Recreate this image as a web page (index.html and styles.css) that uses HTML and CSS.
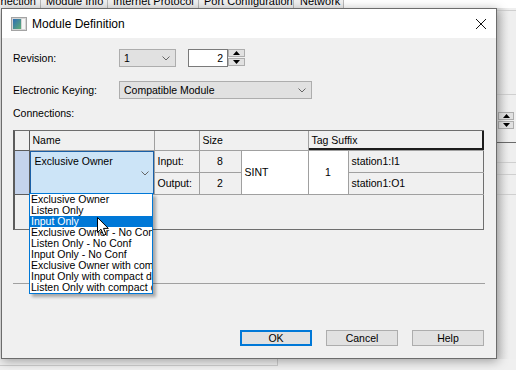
FILE: index.html
```html
<!DOCTYPE html>
<html lang="en">
<head>
  <meta charset="UTF-8">
  <title>Module Definition</title>
  <link rel="stylesheet" href="styles.css">
</head>
<body>
  <!-- tab strip of the properties window behind the dialog -->
  <div class="tabs">
    <span class="tab tab-first">nection</span>
    <span class="tab tab-info">Module Info</span>
    <span class="tab tab-ip">Internet Protocol</span>
    <span class="tab tab-port">Port Configuration</span>
    <span class="tab tab-net">Network</span>
    <span class="tab-fill"></span>
  </div>

  <div class="stage">
    <div class="dialog">
      <div class="titlebar">
        <svg class="app-icon" width="16" height="14" viewBox="0 0 16 14">
          <defs>
            <linearGradient id="ig" x1="0" y1="0" x2="1" y2="1">
              <stop offset="0" stop-color="#2f6db5"/>
              <stop offset="1" stop-color="#5fae74"/>
            </linearGradient>
          </defs>
          <rect x="0.5" y="0.5" width="15" height="13" fill="#d6d6d6" stroke="#a3a3a3"/>
          <rect x="2" y="2" width="8" height="10" fill="url(#ig)"/>
          <rect x="11" y="2" width="3" height="10" fill="#f6f6f6"/>
        </svg>
        <span class="title">Module Definition</span>
        <svg class="close" width="12" height="12" viewBox="0 0 12 12">
          <path d="M1 1 L11 11 M11 1 L1 11" stroke="#111" stroke-width="1"/>
        </svg>
      </div>

      <div class="dialog-body">
        <div class="form-row">
          <span class="field-label">Revision:</span>
          <div class="combo combo-small">
            <span>1</span>
            <svg class="chev" width="8" height="5" viewBox="0 0 8 5"><path d="M0.5 0.5 L4 4 L7.5 0.5" fill="none" stroke="#666"/></svg>
          </div>
          <div class="num-input">2</div>
          <div class="spin">
            <div class="spin-btn"><svg width="7" height="4" viewBox="0 0 7 4"><path d="M0 4 L3.5 0 L7 4 Z" fill="#000"/></svg></div>
            <div class="spin-btn"><svg width="7" height="4" viewBox="0 0 7 4"><path d="M0 0 L3.5 4 L7 0 Z" fill="#000"/></svg></div>
          </div>
        </div>

        <div class="form-row row-keying">
          <span class="field-label">Electronic Keying:</span>
          <div class="combo combo-wide">
            <span>Compatible Module</span>
            <svg class="chev" width="8" height="5" viewBox="0 0 8 5"><path d="M0.5 0.5 L4 4 L7.5 0.5" fill="none" stroke="#666"/></svg>
          </div>
        </div>

        <div class="connections-label">Connections:</div>

        <div class="grid-wrap">
          <table class="conn-grid">
            <colgroup>
              <col class="c-rh"><col class="c-name"><col class="c-label"><col class="c-val"><col class="c-type"><col class="c-tag"><col class="c-suffix">
            </colgroup>
            <tr class="head">
              <th class="rh"></th>
              <th>Name</th>
              <th></th>
              <th colspan="2">Size</th>
              <th colspan="2" class="hot">Tag Suffix</th>
            </tr>
            <tr class="r1">
              <td class="rh rh-sel" rowspan="2"></td>
              <td class="name" rowspan="2">
                <div class="name-combo">
                  <span>Exclusive Owner</span>
                  <svg class="chev" width="8" height="5" viewBox="0 0 8 5"><path d="M0.5 0.5 L4 4 L7.5 0.5" fill="none" stroke="#666"/></svg>
                </div>
              </td>
              <td>Input:</td>
              <td class="num">8</td>
              <td class="white" rowspan="2">SINT</td>
              <td class="white num" rowspan="2">1</td>
              <td>station1:I1</td>
            </tr>
            <tr class="r2">
              <td>Output:</td>
              <td class="num">2</td>
              <td>station1:O1</td>
            </tr>
            <tr class="r3">
              <td class="rh"></td>
              <td colspan="6" class="blank"></td>
            </tr>
          </table>

          <ul class="dropdown">
            <li>Exclusive Owner</li>
            <li>Listen Only</li>
            <li class="active">Input Only</li>
            <li>Exclusive Owner - No Conf</li>
            <li>Listen Only - No Conf</li>
            <li>Input Only - No Conf</li>
            <li>Exclusive Owner with compact data</li>
            <li>Input Only with compact data</li>
            <li>Listen Only with compact data</li>
          </ul>

          <svg class="cursor" width="13" height="20" viewBox="0 0 13 20">
            <path d="M0.5 0.5 L0.5 15.5 L4 12.2 L6.6 18.3 L9 17.3 L6.5 11.4 L11.3 11.4 Z" fill="#fff" stroke="#000" stroke-width="1" stroke-linejoin="miter"/>
          </svg>
        </div>

        <div class="separator"></div>

        <div class="button-row">
          <button class="btn btn-default">OK</button>
          <button class="btn">Cancel</button>
          <button class="btn">Help</button>
        </div>
      </div>
    </div>

    <!-- edge of the window behind -->
    <div class="side">
      <div class="side-line l1"></div>
      <div class="side-line l2"></div>
      <div class="side-spin">
        <div class="spin-btn"><svg width="7" height="4" viewBox="0 0 7 4"><path d="M0 4 L3.5 0 L7 4 Z" fill="#000"/></svg></div>
        <div class="spin-btn"><svg width="7" height="4" viewBox="0 0 7 4"><path d="M0 0 L3.5 4 L7 0 Z" fill="#000"/></svg></div>
      </div>
      <div class="side-line l3"></div>
      <div class="side-line l4"></div>
      <div class="side-line l5"></div>
      <div class="side-line l6"></div>
    </div>
  </div>

  <div class="under">
    <div class="under-box"></div>
  </div>
</body>
</html>
```

FILE: styles.css
```css
:root {
  --bg-main: #f0f0f0;
  --btn-bg: #e1e1e1;
  --btn-border: #adadad;
  --grid-line: #a0a0a0;
  --frame: #5c5c5c;
  --accent: #0078d7;
  --sel-cell: #cce4f7;
  --sel-head: #c4d3ec;
}

* {
  box-sizing: border-box;
}

body {
  margin: 0;
  width: 516px;
  height: 370px;
  overflow: hidden;
  background-color: var(--bg-main);
  font-family: "Liberation Sans", Arial, sans-serif;
  font-size: 10.5px;
  color: #000;
}

/* background window tabs */
.tabs {
  display: flex;
  align-items: flex-end;
  height: 8px;
  overflow: hidden;
  font-size: 11px;
}

.tab {
  flex: none;
  height: 13px;
  line-height: 13px;
  padding: 0 0 0 5px;
  border-right: 1px solid #b9b9b9;
  background-color: var(--bg-main);
  white-space: nowrap;
  overflow: hidden;
}

.tab-first {
  width: 41px;
  padding: 0 4px 0 0;
  text-align: right;
}

.tab-info { width: 67px; }
.tab-ip { width: 91px; }
.tab-port { width: 95px; }
.tab-net { width: 50px; padding-left: 6px; }

.tab-fill {
  flex: 1;
  height: 13px;
  background-color: #fff;
}

.stage {
  display: flex;
  height: 351px;
}

/* dialog */
.dialog {
  position: relative;
  z-index: 2;
  width: 496px;
  height: 351px;
  margin-left: 1px;
  border: 1px solid #6c6c6c;
  background-color: var(--bg-main);
  box-shadow: 1px 2px 10px rgba(0, 0, 0, 0.35);
}

.titlebar {
  display: flex;
  align-items: center;
  height: 29px;
  background-color: #fff;
  padding-left: 9px;
}

.app-icon {
  flex: none;
}

.title {
  margin-left: 5px;
  font-size: 12px;
  flex: 1;
}

.close {
  margin-right: 9px;
}

.dialog-body {
  position: relative;
  padding: 11px 11px 0 11px;
}

.form-row {
  display: flex;
  align-items: center;
  height: 18px;
}

.row-keying {
  margin-top: 14px;
}

.field-label {
  width: 106px;
  flex: none;
}

.combo {
  display: flex;
  align-items: center;
  justify-content: space-between;
  height: 18px;
  padding: 0 5px 0 4px;
  background-color: var(--btn-bg);
  border: 1px solid var(--btn-border);
}

.combo-small {
  width: 57px;
}

.combo-wide {
  width: 193px;
}

.chev {
  flex: none;
}

.num-input {
  width: 40px;
  height: 18px;
  margin-left: 12px;
  padding-right: 4px;
  line-height: 16px;
  text-align: right;
  background-color: #fff;
  border: 1px solid #7a7a7a;
}

.spin {
  display: flex;
  flex-direction: column;
  gap: 1px;
  width: 17px;
  height: 18px;
}

.spin-btn {
  display: flex;
  align-items: center;
  justify-content: center;
  height: 8px;
  background-color: var(--btn-bg);
  border: 1px solid var(--btn-border);
}

.spin-btn svg {
  display: block;
}

.connections-label {
  height: 14px;
  line-height: 14px;
  margin: 7px 0 10px 0;
}

/* connections grid */
.grid-wrap {
  position: relative;
  width: 471px;
  height: 100px;
  border: 1px solid #6e6e6e;
  border-left: 2px solid var(--frame);
  background-color: var(--bg-main);
}

.conn-grid {
  width: 469px;
  table-layout: fixed;
  border-collapse: collapse;
  border-style: hidden;
}

.c-rh { width: 14px; }
.c-name { width: 125px; }
.c-label { width: 45px; }
.c-val { width: 42px; }
.c-type { width: 67px; }
.c-tag { width: 40px; }
.c-suffix { width: 136px; }

.conn-grid th,
.conn-grid td {
  border: 1px solid var(--grid-line);
  padding: 0 0 0 3px;
  font-weight: normal;
  text-align: left;
  white-space: nowrap;
  overflow: hidden;
}

.conn-grid .head th {
  height: 19px;
  border-top-color: #555;
}

.conn-grid th.hot {
  box-shadow: inset -2px -2px 0 #1c1c1c;
}

.conn-grid .r1 td {
  height: 22px;
}

.conn-grid .r2 td {
  height: 21px;
}

.conn-grid .r3 td {
  height: 37px;
}

.conn-grid .rh {
  padding: 0;
  border: 1px solid var(--frame);
}

.conn-grid .rh-sel {
  background-color: var(--sel-head);
}

.conn-grid td.blank {
  border: none;
}

.conn-grid .num {
  text-align: center;
  padding: 0;
}

.conn-grid .white {
  background-color: #fff;
}

.conn-grid td.name {
  padding: 0;
  vertical-align: top;
}

.name-combo {
  position: relative;
  height: 43px;
  padding: 3px 4px;
  background-color: var(--sel-cell);
  border: 1px solid #1a5fa6;
}

.name-combo .chev {
  position: absolute;
  right: 4px;
  bottom: 17px;
}

/* open list of the Name combo */
.dropdown {
  position: absolute;
  left: 14px;
  top: 62px;
  width: 124px;
  margin: 0;
  padding: 0;
  list-style: none;
  background-color: #fff;
  border: 1px solid var(--accent);
  box-shadow: 3px 3px 3px rgba(0, 0, 0, 0.3);
  z-index: 3;
}

.dropdown li {
  height: 11px;
  line-height: 11px;
  padding-left: 1px;
  white-space: nowrap;
  overflow: hidden;
}

.dropdown li.active {
  background-color: var(--accent);
  color: #fff;
}

.cursor {
  position: absolute;
  left: 82px;
  top: 86px;
  z-index: 4;
}

.separator {
  width: 472px;
  height: 1px;
  margin-top: 53px;
  background-color: var(--grid-line);
}

.button-row {
  display: flex;
  justify-content: flex-end;
  gap: 14px;
  margin-top: 46px;
  padding-right: 1px;
}

.btn {
  width: 72px;
  height: 16px;
  padding: 0;
  font-family: inherit;
  font-size: 10.5px;
  line-height: 12px;
  color: #000;
  background-color: var(--btn-bg);
  border: 1px solid var(--btn-border);
}

.btn-default {
  border: 2px solid var(--accent);
}

/* right edge of the window behind */
.side {
  flex: 1;
  display: flex;
  flex-direction: column;
  background: linear-gradient(to right, #dcdcdc, #efefef 12px);
}

.side-line {
  height: 1px;
  background-color: #cfcfcf;
}

.l1 { margin-top: 2px; }
.l2 { margin-top: 83px; }
.l3 { margin-top: 13px; background-color: #6a6a6a; }
.l4 { margin-top: 19px; }
.l5 { margin-top: 11px; }
.l6 { margin-top: 19px; }

.side-spin {
  display: flex;
  flex-direction: column;
  gap: 1px;
  width: 16px;
  height: 17px;
  margin: 17px 0 0 1px;
}

.under {
  height: 11px;
}

.under-box {
  width: 278px;
  height: 7px;
  border-right: 1px solid #cdcdcd;
  border-bottom: 1px solid #cdcdcd;
}
```
